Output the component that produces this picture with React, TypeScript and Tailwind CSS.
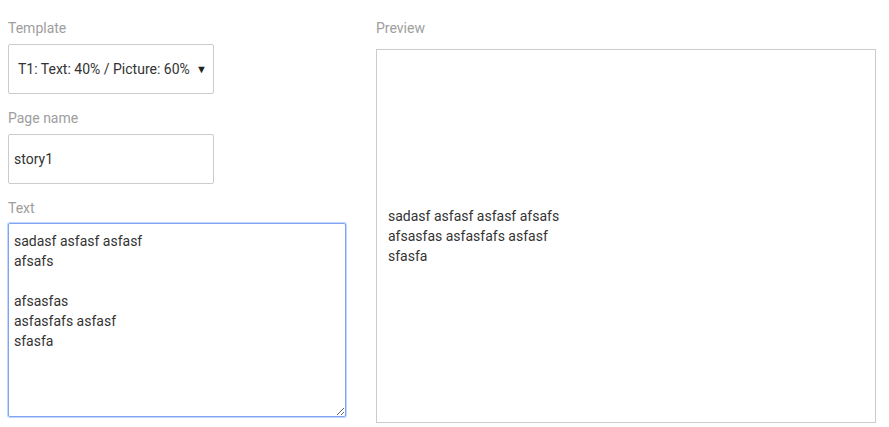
import React from "react";

const textValue = "sadasf asfasf asfasf\nafsafs\n\nafsasfas\nasfasfafs asfasf\nsfasfa";

export default function App() {
  return (
    <div
      className="flex w-[889px] h-[427px] bg-white pl-2 pt-[18px] text-[14px] leading-[20px] text-[#333]"
      style={{ fontFamily: "Roboto, 'Liberation Sans', sans-serif" }}
    >
      <div className="flex flex-col w-[338px]">
        <div className="text-[#9e9e9e] mb-[6px]">Template</div>
        <div className="flex items-center justify-between w-[206px] h-[50px] border border-[#cccccc] rounded-[2px] pl-[9px] pr-[6px]">
          <span>T1: Text: 40% / Picture: 60%</span>
          <span className="text-[11px] leading-none text-[#222]">▼</span>
        </div>
        <div className="text-[#9e9e9e] mt-[14px] mb-[6px]">Page name</div>
        <div className="flex items-center w-[206px] h-[50px] border border-[#cccccc] rounded-[2px] pl-[5px]">
          <span>story1</span>
        </div>
        <div className="text-[#9e9e9e] mt-[14px] mb-[5px]">Text</div>
        <textarea
          readOnly
          defaultValue={textValue}
          className="w-[338px] h-[194px] border border-[#7ea4f2] shadow-[0_0_0_1px_#c3d5fb] rounded-[2px] px-[5px] pt-[7px] text-[14px] leading-[20px] text-[#333] outline-none resize"
          style={{ fontFamily: "Roboto, 'Liberation Sans', sans-serif" }}
        />
      </div>
      <div className="flex flex-col ml-[30px] w-[500px]">
        <div className="text-[#9e9e9e] mb-[11px]">Preview</div>
        <div className="flex items-center w-[500px] h-[374px] border border-[#cccccc] px-[11px]">
          <div className="w-[180px]">
            sadasf asfasf asfasf afsafs afsasfas asfasfafs asfasf sfasfa
          </div>
        </div>
      </div>
    </div>
  );
}
